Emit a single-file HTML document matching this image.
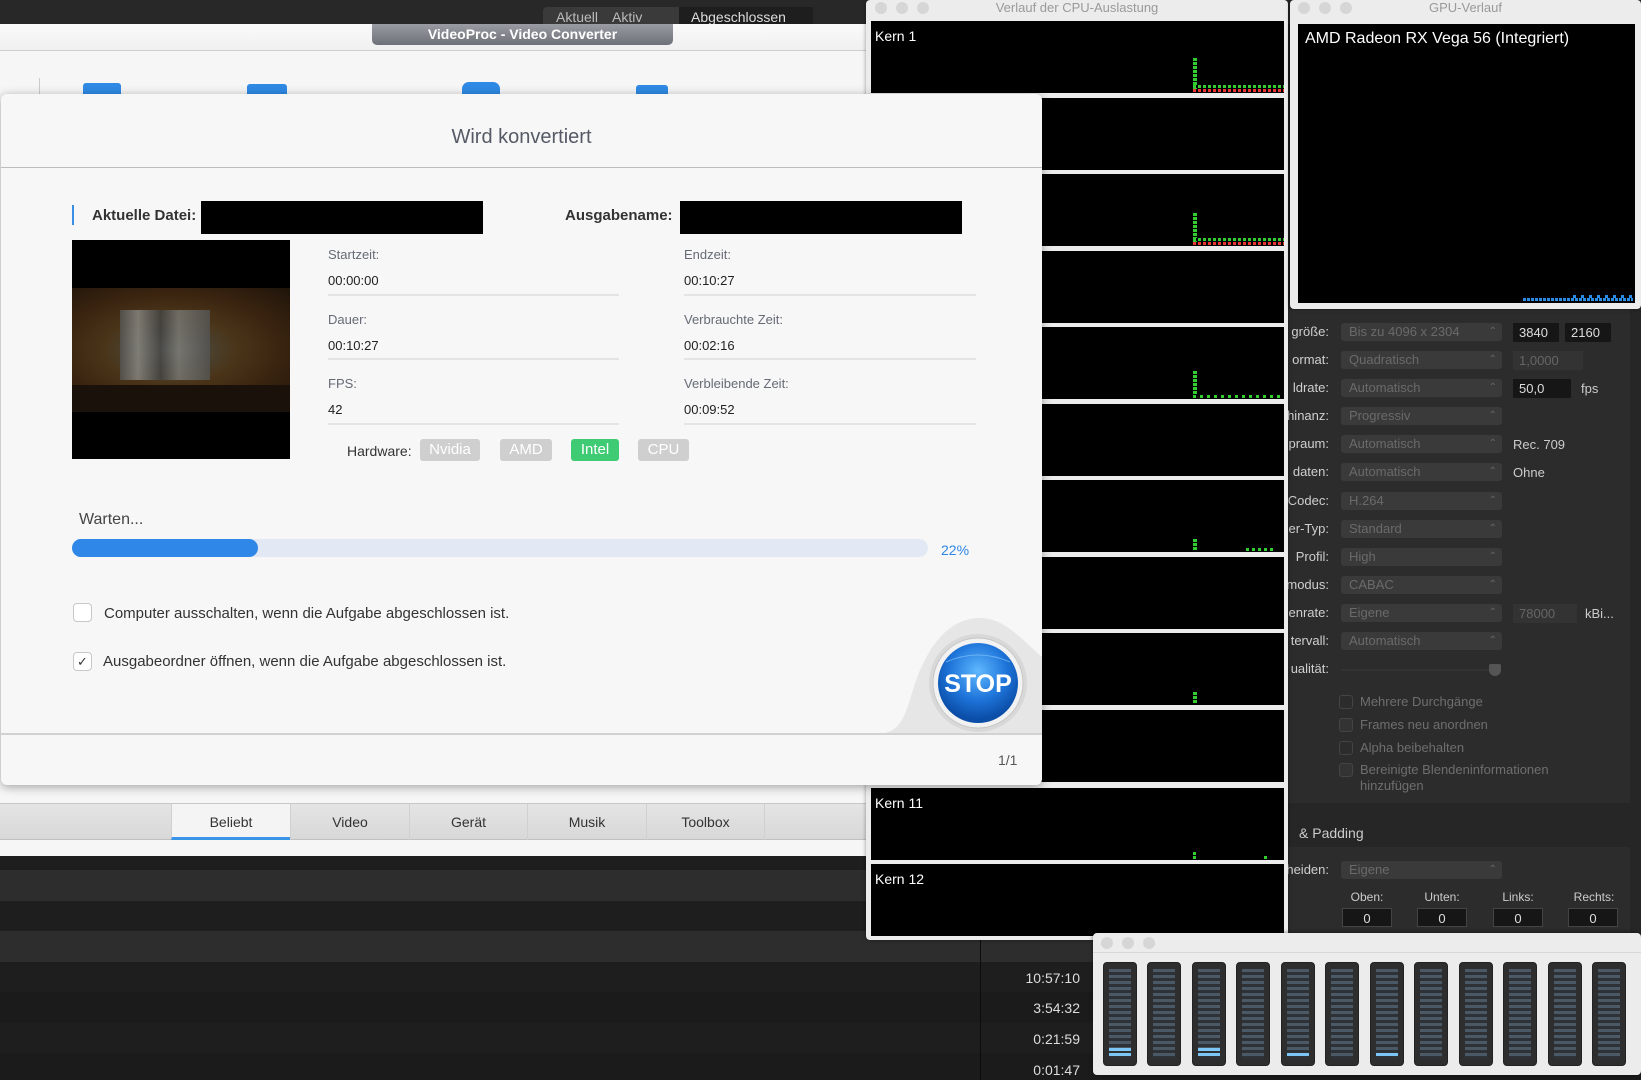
<!DOCTYPE html>
<html><head><meta charset="utf-8"><style>
*{box-sizing:border-box;margin:0;padding:0}
body{width:1641px;height:1080px;overflow:hidden;background:#1e1e1e;font-family:"Liberation Sans",Arial,sans-serif;position:relative}
.a{position:absolute}
.lbl{color:#666a75;font-size:13px}
.val{color:#222;font-size:13px}
.hr{height:2px;background:#e4e4e4}
.badge{position:absolute;top:439px;height:22px;border-radius:3px;background:#cfcfcf;color:#fff;font-size:15px;text-align:center;line-height:22px}
.panel{position:absolute;left:871px;width:413px;height:72px;background:#000}
.kern{color:#fff;font-size:14px;position:absolute;left:4px;top:7px}
.rl{position:absolute;color:#cfcfcf;font-size:13px;text-align:right;width:100px;left:1229px}
.pop{position:absolute;left:1341px;width:161px;height:18px;background:#3a3a3a;border-radius:3px;color:#6a6a6a;font-size:13px;line-height:18px;padding-left:8px}
.pop:after{content:"⌃";position:absolute;right:5px;top:0;font-size:10px;color:#666}
.fld{position:absolute;height:19px;background:#161616;color:#ddd;font-size:13px;line-height:19px;padding-left:6px}
.cb{position:absolute;left:1339px;width:14px;height:14px;border:1px solid #444;border-radius:3px}
.cbt{position:absolute;left:1360px;color:#6e6e6e;font-size:13px}
.meter{position:absolute;top:962px;width:34px;height:104px;background:#2e2e2e;border-radius:4px;border:1px solid #222}
.meter i{position:absolute;left:5px;right:5px;top:6px;bottom:6px;background:repeating-linear-gradient(#4b5866 0 3px,#2e3236 3px 6px)}
.meter b{position:absolute;left:5px;right:5px;height:3px;background:#7cc6f5}
.tab{position:absolute;top:804px;height:36px;border-left:1px solid #d0d0d0;color:#333;font-size:14px;text-align:center;line-height:36px}
.tl{position:absolute;width:12px;height:12px;border-radius:50%;background:#d6d6d6;top:2px}
.row{position:absolute;left:0;width:1641px}
.tm{position:absolute;color:#ddd;font-size:14px;text-align:right}
</style></head><body>
<!-- background rows -->
<div class="row" style="top:870px;height:31px;background:#2d2d2d"></div>
<div class="row" style="top:931px;height:31px;background:#2d2d2d"></div>
<div class="row" style="top:992px;height:31px;background:#1b1b1b"></div>
<div class="row" style="top:1053px;height:27px;background:#1b1b1b"></div>
<div class="a" style="left:980px;top:940px;width:1px;height:140px;background:#0c0c0c"></div>
<div class="tm" style="top:970px;left:900px;width:180px">10:57:10</div>
<div class="tm" style="top:1000px;left:900px;width:180px">3:54:32</div>
<div class="tm" style="top:1031px;left:900px;width:180px">0:21:59</div>
<div class="tm" style="top:1062px;left:900px;width:180px">0:01:47</div>

<!-- top dark bar -->
<div class="a" style="left:0;top:0;width:1641px;height:24px;background:#282828"></div>
<div class="a" style="left:543px;top:7px;width:270px;height:17px;background:#3a3a3a;border-radius:4px 4px 0 0;color:#bbb;font-size:14px;line-height:20px">
<span style="margin-left:13px">Aktuell</span><span style="margin-left:14px">Aktiv</span><span style="position:absolute;left:136px;top:0;width:134px;height:17px;background:#1e1e1e;color:#ddd;padding-left:12px">Abgeschlossen</span></div>

<!-- right dark settings panel -->
<div class="a" style="left:1288px;top:300px;width:353px;height:640px;background:#262626"></div>
<div class="a" style="left:1288px;top:309px;width:342px;height:494px;background:#2c2c2c"></div>
<div class="rl" style="top:324px">größe:</div><div class="pop" style="top:323px">Bis zu 4096 x 2304</div>
<div class="fld" style="left:1513px;top:323px;width:46px">3840</div><div class="fld" style="left:1565px;top:323px;width:46px">2160</div>
<div class="rl" style="top:352px">ormat:</div><div class="pop" style="top:351px">Quadratisch</div>
<div class="fld" style="left:1513px;top:351px;width:70px;background:#333;color:#666">1,0000</div>
<div class="rl" style="top:380px">ldrate:</div><div class="pop" style="top:379px">Automatisch</div>
<div class="fld" style="left:1513px;top:379px;width:58px">50,0</div><div class="a" style="left:1581px;top:381px;color:#ccc;font-size:13px">fps</div>
<div class="rl" style="top:408px">hinanz:</div><div class="pop" style="top:407px">Progressiv</div>
<div class="rl" style="top:436px">praum:</div><div class="pop" style="top:435px">Automatisch</div><div class="a" style="left:1513px;top:437px;color:#ccc;font-size:13px">Rec. 709</div>
<div class="rl" style="top:464px">daten:</div><div class="pop" style="top:463px">Automatisch</div><div class="a" style="left:1513px;top:465px;color:#ccc;font-size:13px">Ohne</div>
<div class="rl" style="top:493px">Codec:</div><div class="pop" style="top:492px">H.264</div>
<div class="rl" style="top:521px">er-Typ:</div><div class="pop" style="top:520px">Standard</div>
<div class="rl" style="top:549px">Profil:</div><div class="pop" style="top:548px">High</div>
<div class="rl" style="top:577px">modus:</div><div class="pop" style="top:576px">CABAC</div>
<div class="rl" style="top:605px">enrate:</div><div class="pop" style="top:604px">Eigene</div>
<div class="fld" style="left:1513px;top:604px;width:64px;background:#333;color:#666">78000</div><div class="a" style="left:1585px;top:606px;color:#ccc;font-size:13px">kBi...</div>
<div class="rl" style="top:633px">tervall:</div><div class="pop" style="top:632px">Automatisch</div>
<div class="rl" style="top:661px">ualität:</div>
<div class="a" style="left:1341px;top:669px;width:153px;height:2px;background:#333"></div>
<div class="a" style="left:1489px;top:664px;width:12px;height:12px;background:#555;border-radius:2px 2px 6px 6px"></div>
<div class="cb" style="top:695px"></div><div class="cbt" style="top:694px">Mehrere Durchgänge</div>
<div class="cb" style="top:718px;background:#333"></div><div class="cbt" style="top:717px">Frames neu anordnen</div>
<div class="cb" style="top:741px"></div><div class="cbt" style="top:740px">Alpha beibehalten</div>
<div class="cb" style="top:763px;background:#333"></div><div class="cbt" style="top:762px;line-height:16px">Bereinigte Blendeninformationen<br>hinzufügen</div>
<div class="a" style="left:1299px;top:825px;color:#ccc;font-size:14px">&amp; Padding</div>
<div class="a" style="left:1288px;top:847px;width:342px;height:90px;background:#2c2c2c"></div>
<div class="rl" style="top:862px">heiden:</div><div class="pop" style="top:861px">Eigene</div>
<div class="a" style="left:1341px;top:890px;width:52px;text-align:center;color:#ccc;font-size:12px">Oben:</div>
<div class="a" style="left:1416px;top:890px;width:52px;text-align:center;color:#ccc;font-size:12px">Unten:</div>
<div class="a" style="left:1492px;top:890px;width:52px;text-align:center;color:#ccc;font-size:12px">Links:</div>
<div class="a" style="left:1568px;top:890px;width:52px;text-align:center;color:#ccc;font-size:12px">Rechts:</div>
<div class="fld" style="left:1342px;top:908px;width:50px;text-align:center;padding:0;border:1px solid #444">0</div>
<div class="fld" style="left:1417px;top:908px;width:50px;text-align:center;padding:0;border:1px solid #444">0</div>
<div class="fld" style="left:1493px;top:908px;width:50px;text-align:center;padding:0;border:1px solid #444">0</div>
<div class="fld" style="left:1568px;top:908px;width:50px;text-align:center;padding:0;border:1px solid #444">0</div>

<!-- VideoProc main window -->
<div class="a" style="left:0;top:24px;width:866px;height:832px;background:#f6f6f6"></div>
<div class="a" style="left:0;top:24px;width:866px;height:27px;background:linear-gradient(#fafafa,#f0f0f0);border-bottom:1px solid #cfcfcf"></div>
<div class="a" style="left:372px;top:24px;width:301px;height:21px;background:linear-gradient(#9a9ca3,#6e7079);border-radius:0 0 5px 5px;color:#fff;font-weight:bold;font-size:14px;text-align:center;line-height:20px">VideoProc - Video Converter</div>
<div class="a" style="left:39px;top:78px;width:1px;height:18px;background:#ccc"></div>
<div class="a" style="left:83px;top:83px;width:38px;height:12px;background:#2f8ae5;border-radius:3px 3px 0 0"></div>
<div class="a" style="left:247px;top:84px;width:40px;height:12px;background:#2f8ae5;border-radius:3px 3px 0 0"></div>
<div class="a" style="left:462px;top:82px;width:38px;height:14px;background:#2f8ae5;border-radius:7px 7px 0 0"></div>
<div class="a" style="left:636px;top:85px;width:32px;height:11px;background:#2f8ae5;border-radius:3px 3px 0 0"></div>
<div class="a" style="left:0;top:803px;width:866px;height:37px;background:linear-gradient(#e4e4e4,#d8d8d8);border-top:1px solid #c8c8c8;border-bottom:1px solid #c0c0c0"></div>
<div class="tab" style="left:171px;width:119px;background:#f4f4f4;border-bottom:3px solid #3a95e8">Beliebt</div>
<div class="tab" style="left:290px;width:119px">Video</div>
<div class="tab" style="left:409px;width:118px">Gerät</div>
<div class="tab" style="left:527px;width:119px">Musik</div>
<div class="tab" style="left:646px;width:118px">Toolbox</div>
<div class="tab" style="left:764px;width:10px"></div>

<!-- CPU window -->
<div class="a" style="left:866px;top:0;width:422px;height:940px;background:#ececec;border-radius:4px;box-shadow:0 0 4px rgba(0,0,0,.4)"></div>
<div class="tl" style="left:875px"></div><div class="tl" style="left:896px"></div><div class="tl" style="left:917px"></div>
<div class="a" style="left:866px;top:0;width:422px;text-align:center;color:#9a9a9a;font-size:13px">Verlauf der CPU-Auslastung</div>
<div class="panel" style="top:21px"><span class="kern">Kern 1</span>
<div class="a" style="left:322px;top:37px;width:4px;height:33px;background:repeating-linear-gradient(#3c3 0 3px,#000 3px 4px)"></div>
<div class="a" style="left:322px;bottom:5px;width:91px;height:3px;background:repeating-linear-gradient(90deg,#3c3 0 3px,#000 3px 5px)"></div>
<div class="a" style="left:322px;bottom:1px;width:91px;height:3px;background:repeating-linear-gradient(90deg,#e33 0 3px,#000 3px 5px)"></div></div>
<div class="panel" style="top:98px"></div>
<div class="panel" style="top:174px">
<div class="a" style="left:322px;top:39px;width:4px;height:30px;background:repeating-linear-gradient(#3c3 0 3px,#000 3px 4px)"></div>
<div class="a" style="left:322px;bottom:5px;width:91px;height:3px;background:repeating-linear-gradient(90deg,#3c3 0 3px,#000 3px 5px)"></div>
<div class="a" style="left:322px;bottom:1px;width:91px;height:3px;background:repeating-linear-gradient(90deg,#e33 0 3px,#000 3px 5px)"></div></div>
<div class="panel" style="top:251px"></div>
<div class="panel" style="top:327px">
<div class="a" style="left:322px;top:44px;width:4px;height:26px;background:repeating-linear-gradient(#3c3 0 3px,#000 3px 4px)"></div>
<div class="a" style="left:322px;bottom:1px;width:91px;height:3px;background:repeating-linear-gradient(90deg,#3c3 0 3px,#000 3px 7px)"></div></div>
<div class="panel" style="top:404px"></div>
<div class="panel" style="top:480px">
<div class="a" style="left:322px;bottom:1px;width:4px;height:12px;background:repeating-linear-gradient(#3c3 0 3px,#000 3px 4px)"></div>
<div class="a" style="left:375px;bottom:1px;width:30px;height:3px;background:repeating-linear-gradient(90deg,#3c3 0 3px,#000 3px 6px)"></div></div>
<div class="panel" style="top:557px"></div>
<div class="panel" style="top:633px">
<div class="a" style="left:322px;bottom:1px;width:4px;height:12px;background:repeating-linear-gradient(#3c3 0 3px,#000 3px 4px)"></div></div>
<div class="panel" style="top:710px"></div>
<div class="panel" style="top:788px"><span class="kern">Kern 11</span>
<div class="a" style="left:322px;bottom:1px;width:3px;height:7px;background:repeating-linear-gradient(#3c3 0 3px,#000 3px 4px)"></div>
<div class="a" style="left:393px;bottom:1px;width:3px;height:3px;background:#3c3"></div></div>
<div class="panel" style="top:864px"><span class="kern">Kern 12</span></div>

<!-- dialog -->
<div class="a" style="left:1px;top:94px;width:1041px;height:691px;background:#f7f7f7;border-radius:6px;box-shadow:0 2px 10px rgba(0,0,0,.35)"></div>
<div class="a" style="left:1px;top:126px;width:1041px;text-align:center;color:#555a66;font-size:20px">Wird konvertiert</div>
<div class="a" style="left:1px;top:167px;width:1041px;height:1px;background:#bdbdbd"></div>
<div class="a" style="left:72px;top:205px;width:2px;height:20px;background:#3a8ee6"></div>
<div class="a" style="left:92px;top:207px;font-size:15px;font-weight:bold;color:#333">Aktuelle Datei:</div>
<div class="a" style="left:201px;top:201px;width:282px;height:33px;background:#000"></div>
<div class="a" style="left:565px;top:207px;font-size:15px;font-weight:bold;color:#333">Ausgabename:</div>
<div class="a" style="left:680px;top:201px;width:282px;height:33px;background:#000"></div>
<div class="a" style="left:72px;top:240px;width:218px;height:219px;background:#000"></div>
<div class="a" style="left:72px;top:288px;width:218px;height:124px;background:radial-gradient(ellipse at 45% 50%,#6a6a60 0,#4a4434 20%,#4a3418 40%,#3a2410 65%,#1e140a 100%)"></div>
<div class="a" style="left:120px;top:310px;width:90px;height:70px;background:linear-gradient(90deg,#555,#8a8a85 20%,#444 45%,#7a7a75 65%,#555);opacity:.8"></div>
<div class="a" style="left:72px;top:385px;width:218px;height:27px;background:#1a120a"></div>
<div class="a lbl" style="left:328px;top:247px">Startzeit:</div><div class="a val" style="left:328px;top:273px">00:00:00</div><div class="a hr" style="left:328px;top:294px;width:291px"></div>
<div class="a lbl" style="left:328px;top:312px">Dauer:</div><div class="a val" style="left:328px;top:338px">00:10:27</div><div class="a hr" style="left:328px;top:358px;width:291px"></div>
<div class="a lbl" style="left:328px;top:376px">FPS:</div><div class="a val" style="left:328px;top:402px">42</div><div class="a hr" style="left:328px;top:423px;width:291px"></div>
<div class="a lbl" style="left:684px;top:247px">Endzeit:</div><div class="a val" style="left:684px;top:273px">00:10:27</div><div class="a hr" style="left:684px;top:294px;width:292px"></div>
<div class="a lbl" style="left:684px;top:312px">Verbrauchte Zeit:</div><div class="a val" style="left:684px;top:338px">00:02:16</div><div class="a hr" style="left:684px;top:358px;width:292px"></div>
<div class="a lbl" style="left:684px;top:376px">Verbleibende Zeit:</div><div class="a val" style="left:684px;top:402px">00:09:52</div><div class="a hr" style="left:684px;top:423px;width:292px"></div>
<div class="a" style="left:347px;top:443px;font-size:14px;color:#333">Hardware:</div>
<div class="badge" style="left:420px;width:60px">Nvidia</div>
<div class="badge" style="left:500px;width:52px">AMD</div>
<div class="badge" style="left:571px;width:48px;background:#3fcb74">Intel</div>
<div class="badge" style="left:638px;width:51px">CPU</div>
<div class="a" style="left:79px;top:511px;font-size:16px;color:#444">Warten...</div>
<div class="a" style="left:72px;top:539px;width:856px;height:18px;background:#e3e9f4;border-radius:9px"></div>
<div class="a" style="left:72px;top:539px;width:186px;height:18px;background:#2f87e8;border-radius:9px"></div>
<div class="a" style="left:941px;top:542px;font-size:14px;color:#2f87e8">22%</div>
<div class="a" style="left:73px;top:603px;width:19px;height:19px;border:1px solid #c8c8c8;border-radius:4px;background:#fff"></div>
<div class="a" style="left:104px;top:605px;font-size:15px;color:#333">Computer ausschalten, wenn die Aufgabe abgeschlossen ist.</div>
<div class="a" style="left:73px;top:652px;width:19px;height:19px;border:1px solid #c8c8c8;border-radius:4px;background:#fff;font-size:13px;color:#333;text-align:center;line-height:18px">✓</div>
<div class="a" style="left:103px;top:653px;font-size:15px;color:#333">Ausgabeordner öffnen, wenn die Aufgabe abgeschlossen ist.</div>
<svg class="a" style="left:880px;top:610px" width="163" height="126">
<defs><radialGradient id="bl" cx="50%" cy="35%" r="60%"><stop offset="0" stop-color="#5fb8ff"/><stop offset=".6" stop-color="#1e74d9"/><stop offset="1" stop-color="#0b4ea8"/></radialGradient></defs>
<path d="M5 123 C30 118 28 80 45 50 C60 20 80 8 100 8 C125 8 142 30 162 47 L162 123 Z" fill="#e6e6e6"/>
<circle cx="98" cy="73" r="49" fill="#d8d8d8"/>
<circle cx="98" cy="73" r="45" fill="#f2f2f2" stroke="#c6c6c6"/>
<circle cx="98" cy="73" r="40" fill="url(#bl)"/>
<path d="M66 52 Q98 38 130 52" stroke="#8cc8ff" stroke-width="1" fill="none" opacity=".6"/>
<text x="98" y="82" text-anchor="middle" font-family="Liberation Sans" font-weight="bold" font-size="25" fill="#fff">STOP</text>
</svg>
<div class="a" style="left:1px;top:733px;width:1041px;height:2px;background:#d2d2d2"></div>
<div class="a" style="left:998px;top:752px;font-size:14px;color:#555">1/1</div>

<!-- GPU window -->
<div class="a" style="left:1290px;top:0;width:351px;height:309px;background:#ececec;border-radius:4px;box-shadow:0 0 4px rgba(0,0,0,.4)"></div>
<div class="tl" style="left:1298px"></div><div class="tl" style="left:1319px"></div><div class="tl" style="left:1340px"></div>
<div class="a" style="left:1290px;top:0;width:351px;text-align:center;color:#9a9a9a;font-size:13px">GPU-Verlauf</div>
<div class="a" style="left:1298px;top:24px;width:337px;height:279px;background:#000"><span class="a" style="left:7px;top:6px;color:#fff;font-size:16px">AMD Radeon RX Vega 56 (Integriert)</span>
<div class="a" style="left:225px;bottom:2px;width:110px;height:3px;background:repeating-linear-gradient(90deg,#2a8ee6 0 3px,#000 3px 4px)"></div>
<div class="a" style="left:275px;bottom:5px;width:60px;height:3px;background:repeating-linear-gradient(90deg,#2a8ee6 0 3px,#000 3px 8px)"></div></div>

<!-- meter window -->
<div class="a" style="left:1093px;top:933px;width:548px;height:142px;background:#ececec;border-radius:4px;box-shadow:0 0 4px rgba(0,0,0,.5)"></div>
<div class="tl" style="left:1101px;top:937px"></div><div class="tl" style="left:1122px;top:937px"></div><div class="tl" style="left:1143px;top:937px"></div>
<div class="a" style="left:1093px;top:952px;width:548px;height:1px;background:#d8d8d8"></div>
<div class="meter" style="left:1103px"><i></i><b style="bottom:14px"></b><b style="bottom:9px"></b></div>
<div class="meter" style="left:1147px"><i></i></div>
<div class="meter" style="left:1192px"><i></i><b style="bottom:14px"></b><b style="bottom:9px"></b></div>
<div class="meter" style="left:1236px"><i></i></div>
<div class="meter" style="left:1281px"><i></i><b style="bottom:9px"></b></div>
<div class="meter" style="left:1325px"><i></i></div>
<div class="meter" style="left:1370px"><i></i><b style="bottom:9px"></b></div>
<div class="meter" style="left:1414px"><i></i></div>
<div class="meter" style="left:1459px"><i></i></div>
<div class="meter" style="left:1503px"><i></i></div>
<div class="meter" style="left:1548px"><i></i></div>
<div class="meter" style="left:1592px"><i></i></div>
</body></html>
